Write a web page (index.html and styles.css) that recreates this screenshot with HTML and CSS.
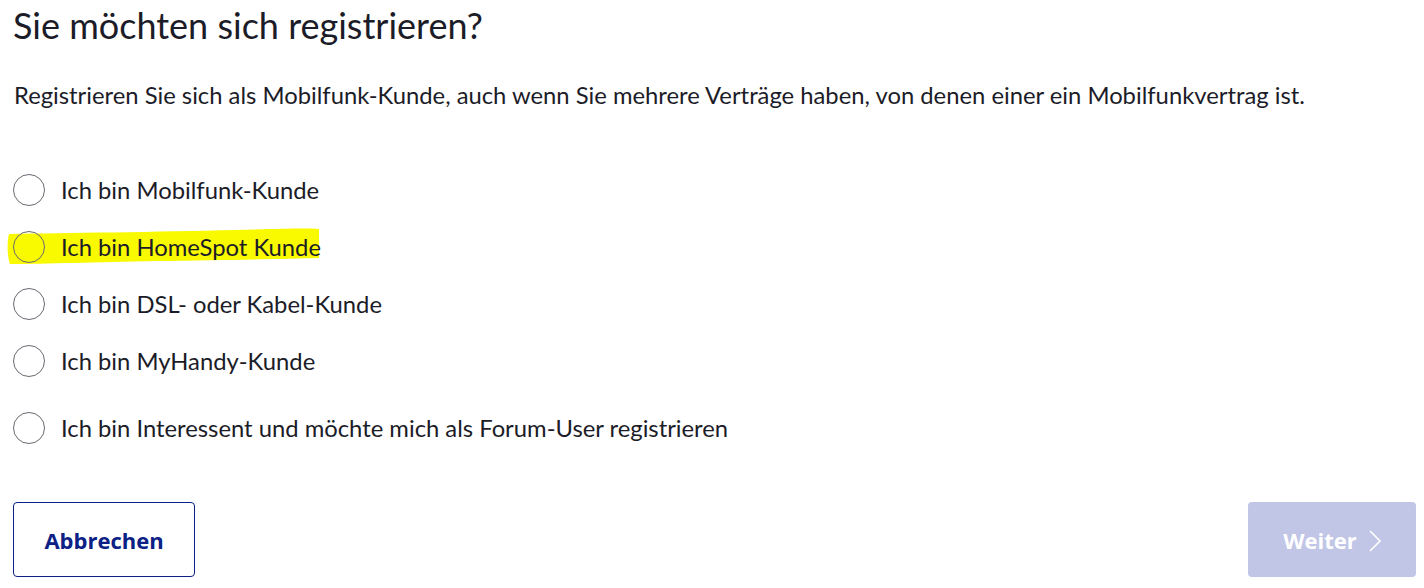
FILE: index.html
```html
<!DOCTYPE html>
<html lang="de">
<head>
<meta charset="utf-8">
<title>Registrieren</title>
<link rel="stylesheet" href="styles.css">
</head>
<body>
<main class="page">
  <h1 class="title">Sie möchten sich registrieren?</h1>
  <p class="intro">Registrieren Sie sich als Mobilfunk-Kunde, auch wenn Sie mehrere Verträge haben, von denen einer ein Mobilfunkvertrag ist.</p>
  <div class="options">
    <label class="option"><span class="radio"></span><span class="label">Ich bin Mobilfunk-Kunde</span></label>
    <label class="option marked">
      <svg class="highlight" width="316" height="38" viewBox="0 0 316 38"><path d="M3 7 C60 6 150 5 230 3 C270 2 300 1 313 2 L313 31 C280 32 220 33 150 34 C90 35 40 37 4 37 C1 30 1 14 3 7 Z" fill="#f9f900"/></svg>
      <span class="radio"></span><span class="label">Ich bin HomeSpot Kunde</span></label>
    <label class="option"><span class="radio"></span><span class="label">Ich bin DSL- oder Kabel-Kunde</span></label>
    <label class="option"><span class="radio"></span><span class="label">Ich bin MyHandy-Kunde</span></label>
    <label class="option last"><span class="radio"></span><span class="label">Ich bin Interessent und möchte mich als Forum-User registrieren</span></label>
  </div>
  <div class="actions">
    <button class="btn btn-secondary" type="button">Abbrechen</button>
    <button class="btn btn-primary" type="button" disabled>Weiter <svg class="chev" width="12" height="22" viewBox="0 0 12 22"><path d="M1 1 L11 11 L1 21" fill="none" stroke="#fff" stroke-width="1.6"/></svg></button>
  </div>
</main>
</body>
</html>
```
FILE: styles.css
```css
* { box-sizing: border-box; }
html, body { margin: 0; padding: 0; background: #fff; }
body {
  font-family: Lato, "Open Sans", sans-serif;
  color: #1a1a2e;
}
.page {
  padding: 0 8px 0 13px;
  display: flex;
  flex-direction: column;
}
.title {
  margin: 0;
  padding-top: 2px;
  font-size: 36px;
  font-weight: 400;
  line-height: 46px;
  color: #1c1c28;
}
.intro {
  margin: 31px 0 0 1px;
  font-size: 23.8px;
  line-height: 32px;
  color: #1c1c28;
}
.options {
  display: flex;
  flex-direction: column;
  margin-top: 50px;
}
.option {
  position: relative;
  display: flex;
  align-items: center;
  height: 57px;
  gap: 16px;
  font-size: 23.8px;
  color: #1c1c28;
}
.option.last { margin-top: 9px; height: 60px; }
.radio {
  position: relative;
  z-index: 1;
  width: 32px;
  height: 32px;
  border: 1.5px solid #6a6a72;
  border-radius: 50%;
  flex: none;
}
.label { position: relative; z-index: 1; }
.highlight {
  position: absolute;
  left: -7px;
  top: 9px;
  z-index: 0;
}
.actions {
  display: flex;
  justify-content: space-between;
  margin-top: 44px;
}
.btn {
  height: 75px;
  border-radius: 4px;
  font-family: "Open Sans", Lato, sans-serif;
  font-size: 22px;
  font-weight: 700;
  display: flex;
  align-items: center;
  justify-content: center;
  gap: 12px;
}
.btn-secondary {
  width: 182px;
  background: #fff;
  border: 1.5px solid #0b2185;
  color: #0b2185;
}
.btn-primary {
  width: 168px;
  background: #c1c5e6;
  border: none;
  color: #fff;
}
.chev { margin-top: 2px; }
```
